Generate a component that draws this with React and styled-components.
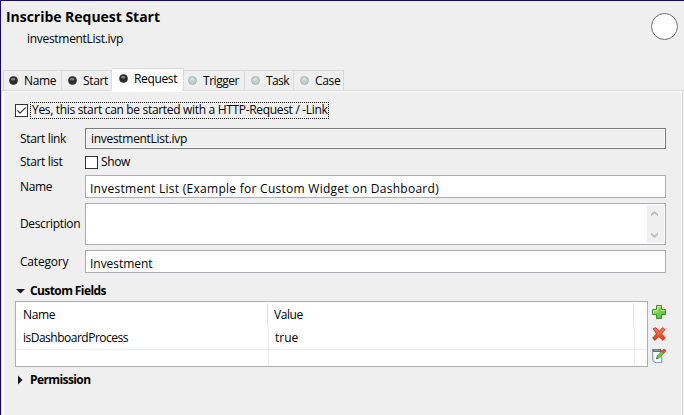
import React from 'react';
import styled, { createGlobalStyle } from 'styled-components';

const Global = createGlobalStyle`
  * { box-sizing: border-box; }
  body { margin: 0; background: #efefef; }
`;

const Window = styled.main`
  width: 684px;
  height: 415px;
  overflow: hidden;
  display: flex;
  flex-direction: column;
  background: #efefef;
  border-top: 1px solid #1d0c5c;
  border-left: 1px solid #1d0c5c;
  font: 12px/16px "Open Sans", "Noto Sans", sans-serif;
  color: #000;
`;

const Text = styled.span`
  display: block;
  flex: none;
  white-space: pre;
  line-height: 16px;
  letter-spacing: ${(p) => p.$spacing ?? -0.35}px;
  font-weight: ${(p) => (p.$bold ? 700 : 400)};
`;

const Header = styled.header`
  height: 67px;
  flex: none;
  display: flex;
  justify-content: space-between;
  padding: 8px 6px 0 5px;
`;

const Title = styled.h1`
  margin: 0 0 6px;
  font-size: 14px;
  line-height: 16px;
  font-weight: 700;
  letter-spacing: -0.03px;
  white-space: nowrap;
`;

const Subtitle = styled.div`
  padding-left: 21px;
`;

const StatusCircle = styled.div`
  width: 27px;
  height: 27px;
  margin-top: 4px;
  border: 1px solid #6c6c6c;
  border-radius: 50%;
  background: #fff;
`;

const TabBar = styled.nav`
  height: 22px;
  flex: none;
  display: flex;
  align-items: flex-end;
  padding-left: 2px;
`;

const Tab = styled.div`
  width: ${(p) => p.$width}px;
  height: ${(p) => (p.$active ? 22 : 20)}px;
  display: flex;
  align-items: flex-start;
  gap: ${(p) => p.$gap}px;
  padding: 2px 0 0 ${(p) => p.$pad}px;
  border: 1px solid #d9d9d9;
  border-width: 1px 1px 0 ${(p) => (p.$first ? 1 : 0)}px;
  background: ${(p) => (p.$active ? '#fff' : '#efefef')};
`;

const Bullet = styled.svg`
  width: 9px;
  height: 9px;
  flex: none;
  margin-top: 3px;
`;

const Panel = styled.section`
  flex: 1;
  margin-right: 1px;
  border: solid #d9d9d9;
  border-width: 1px 1px 0 1px;
  background: #fff;
  padding: 1px 1px 0 2px;
`;

const ActiveJoin = styled.div`
  width: 71px;
  height: 1px;
  margin: -2px 0 1px 107px;
  background: #fff;
`;

const Content = styled.div`
  height: 100%;
  display: flex;
  flex-direction: column;
  background: #efefef;
  padding: 10px 14px 0 11px;
`;

const StartOption = styled.div`
  height: 17px;
  display: flex;
  align-items: center;
  gap: 2px;
  margin-bottom: 9px;
`;

const Box = styled.svg`
  width: 13px;
  height: 13px;
  flex: none;
`;

const Focus = styled.div`
  width: 299px;
  height: 17px;
  display: flex;
  outline: 1px dotted #000;
  outline-offset: -1px;
  padding: 0 0 0 2px;
`;

const Field = styled.div`
  height: ${(p) => p.$height}px;
  display: grid;
  grid-template-columns: 65px 581px;
  margin: 0 0 ${(p) => p.$after}px 5px;
`;

const Label = styled.label`
  padding-top: ${(p) => p.$top}px;
`;

const Input = styled.div`
  display: flex;
  border: 1px solid ${(p) => (p.$readOnly ? '#7a7a7a' : '#abadb3')};
  background: ${(p) => (p.$readOnly ? '#efefef' : '#fff')};
  box-shadow: ${(p) => (p.$readOnly ? 'inset 0 0 0 1px #fafafa' : 'none')};
  padding: ${(p) => p.$top}px 1px 0 ${(p) => p.$left}px;
`;

const CheckLine = styled.div`
  display: flex;
  align-items: center;
  gap: 3px;
`;

const TextArea = styled.div`
  display: flex;
  justify-content: flex-end;
  padding: 1px;
  border: 1px solid #abadb3;
  background: #fff;
`;

const ScrollBar = styled.div`
  width: 17px;
  height: 38px;
  display: flex;
  flex-direction: column;
  align-items: center;
  justify-content: space-between;
  padding: 6px 2px 5px 0;
  background: #efefef;
`;

const Chevron = styled.svg`
  width: 7px;
  height: 6px;
`;

const SectionHead = styled.div`
  height: 16px;
  flex: none;
  display: flex;
  align-items: center;
`;

const Arrow = styled.svg`
  width: 15px;
  height: 16px;
`;

const TableArea = styled.div`
  display: flex;
  height: 66px;
  margin: 2px 0 5px;
  gap: 4px;
`;

const Table = styled.div`
  width: 633px;
  flex: none;
  display: grid;
  grid-template-rows: 24px 22px 1px 15px;
  border: 1px solid #abadb3;
  background: #fff;
  padding: 1px 1px 0;
`;

const HeaderRow = styled.div`
  display: grid;
  grid-template-columns: 251px 366px;
  > * {
    border-right: 1px solid #e3e3e3;
    padding: 4px 0 0 6px;
  }
`;

const Row = styled.div`
  display: grid;
  grid-template-columns: 252px 366px;
  > * {
    border-right: 1px solid #efefef;
    padding: 3px 0 0 6px;
  }
`;

const Rule = styled.div`
  background: #efefef;
`;

const Actions = styled.div`
  width: 14px;
  display: flex;
  flex-direction: column;
  gap: 8px;
  padding-top: 4px;
`;

const Icon = styled.svg`
  width: 14px;
  height: 14px;
  flex: none;
`;

const Defs = styled.svg`
  width: 0;
  height: 0;
  position: absolute;
`;

const tabs = [
  { label: 'Name', width: 59, pad: 5, gap: 6, on: true },
  { label: 'Start', width: 50, pad: 6, gap: 6, on: true },
  { label: 'Request', width: 72, pad: 7, gap: 6, on: true, active: true },
  { label: 'Trigger', width: 61, pad: 4, gap: 6 },
  { label: 'Task', width: 49, pad: 6, gap: 6 },
  { label: 'Case', width: 50, pad: 6, gap: 6 },
];

function TabItem({ tab, first }) {
  return (
    <Tab $width={tab.width} $pad={tab.pad} $gap={tab.gap} $active={tab.active} $first={first}>
      <Bullet viewBox="0 0 9 9">
        <circle
          cx="4.5"
          cy="4.5"
          r="4"
          fill={tab.on ? '#2b2b2b' : '#bfd0d0'}
          stroke={tab.on ? '#3a3a3a' : '#a3adad'}
          strokeWidth=".8"
        />
        <ellipse cx="4.2" cy="3.2" rx="2.2" ry="1.3" fill={tab.on ? '#858585' : '#d5e3e3'} />
      </Bullet>
      <Text $spacing={tab.label === 'Task' ? -0.6 : tab.label === 'Trigger' ? -0.45 : undefined}>{tab.label}</Text>
    </Tab>
  );
}

function CheckBox({ checked }) {
  return (
    <Box viewBox="0 0 13 13">
      <rect x=".5" y=".5" width="12" height="12" fill="#fff" stroke="#333" />
      {checked && <path d="M2.5 6.5 5 9.2 10.7 3.4" fill="none" stroke="#333" strokeWidth="1.2" />}
    </Box>
  );
}

function Gradients() {
  return (
    <defs>
      <linearGradient id="green" x2="1" y2="1">
        <stop offset="0" stopColor="#b5f08c" />
        <stop offset="1" stopColor="#35b81c" />
      </linearGradient>
      <linearGradient id="red" x2="0" y2="1">
        <stop offset="0" stopColor="#ff8560" />
        <stop offset="1" stopColor="#e9300c" />
      </linearGradient>
    </defs>
  );
}

export default function App() {
  return (
    <Window>
      <Global />
      <Defs><Gradients /></Defs>
      <Header>
        <div>
          <Title>Inscribe Request Start</Title>
          <Subtitle><Text $spacing={-0.3}>investmentList.ivp</Text></Subtitle>
        </div>
        <StatusCircle />
      </Header>
      <TabBar>
        {tabs.map((tab, i) => <TabItem key={tab.label} tab={tab} first={i === 0} />)}
      </TabBar>
      <Panel>
        <ActiveJoin />
        <Content>
          <StartOption>
            <CheckBox checked />
            <Focus><Text $spacing={-0.32}>Yes, this start can be started with a HTTP-Request / -Link</Text></Focus>
          </StartOption>
          <Field $height={21} $after={5}>
            <Label $top={3}><Text>Start link</Text></Label>
            <Input $readOnly $top={2} $left={5}><Text $spacing={-0.3}>investmentList.ivp</Text></Input>
          </Field>
          <Field $height={16} $after={5}>
            <Label $top={0}><Text>Start list</Text></Label>
            <CheckLine><CheckBox /><Text>Show</Text></CheckLine>
          </Field>
          <Field $height={23} $after={5}>
            <Label $top={4}><Text>Name</Text></Label>
            <Input $top={5} $left={4}><Text $spacing={0.27}>Investment List (Example for Custom Widget on Dashboard)</Text></Input>
          </Field>
          <Field $height={42} $after={5}>
            <Label $top={13}><Text>Description</Text></Label>
            <TextArea>
              <ScrollBar>
                <Chevron viewBox="0 0 7 6"><path d="M0 5V3L3.5 0 7 3V5.5L3.5 2.5 0 5.5Z" fill="#bcbcbc" /></Chevron>
                <Chevron viewBox="0 0 7 6"><path d="M0 1V3L3.5 6 7 3V.5L3.5 3.5 0 .5Z" fill="#bcbcbc" /></Chevron>
              </ScrollBar>
            </TextArea>
          </Field>
          <Field $height={23} $after={10}>
            <Label $top={4}><Text $spacing={-0.2}>Category</Text></Label>
            <Input $top={5} $left={4}><Text $spacing={-0.04}>Investment</Text></Input>
          </Field>
          <SectionHead>
            <Arrow viewBox="0 0 15 16"><path d="M1 6H10L5.5 10.5Z" fill="#1a1a1a" /></Arrow>
            <Text $bold $spacing={-0.6}>Custom Fields</Text>
          </SectionHead>
          <TableArea>
            <Table>
              <HeaderRow>
                <div><Text>Name</Text></div>
                <div><Text $spacing={-0.45}>Value</Text></div>
              </HeaderRow>
              <Row>
                <div><Text $spacing={-0.5}>isDashboardProcess</Text></div>
                <div><Text $spacing={0}>true</Text></div>
              </Row>
              <Rule />
              <Row><div /><div /></Row>
            </Table>
            <Actions>
              <Icon viewBox="0 0 14 14">
                <path d="M4.5.5h5v4h4v5h-4v4h-5v-4h-4v-5h4Z" fill="url(#green)" stroke="#2d9720" />
                <path d="M5.5 5V1.5H8.5M1.5 8.5v-3H5M9 5.5h3.5" fill="none" stroke="#d2f7b9" />
              </Icon>
              <Icon viewBox="0 0 14 14">
                <path d="M1.2 1.7 3.7.7 7 4.4 10.7.6 13 2.6 9.3 6.6 13.3 11 10.8 13.2 6.8 9.5 3 13.4.7 11.1 4.5 6.8Z" fill="url(#red)" stroke="#c92d12" strokeWidth=".9" strokeLinejoin="round" />
              </Icon>
              <Icon viewBox="0 0 14 14">
                <path d="M.5 1.5h8l1.5 12H3L.8 11.5Z" fill="#f7f9ff" stroke="#8794c4" strokeWidth=".8" />
                <path d="M0 0h9l1 3H1Z" fill="#6b6b6b" />
                <path d="M2 1.2H8" stroke="#bbb" strokeWidth=".8" />
                <path d="M.7 3v8.3L3 13.3M9.8 8v5.5H3" fill="none" stroke="#8794c4" strokeWidth=".7" />
                <path d="M4.4 9.8 5.2 6.8 9.5 2.4 11.8 4.4 7.3 9Z" fill="#61cc38" stroke="#3d9a35" strokeWidth=".6" />
                <path d="m9.5 2.2 1.3-1.5Q12.2-.5 13.3.7T13.2 3L12 4.2Z" fill="#ee4535" stroke="#c5261b" strokeWidth=".5" />
                <path d="m4.2 10 .6-1.7 1 1.2Z" fill="#444" />
              </Icon>
            </Actions>
          </TableArea>
          <SectionHead>
            <Arrow viewBox="0 0 15 16"><path d="M3 3.5V12.5L7.5 8Z" fill="#1a1a1a" /></Arrow>
            <Text $bold $spacing={-0.6}>Permission</Text>
          </SectionHead>
        </Content>
      </Panel>
    </Window>
  );
}
